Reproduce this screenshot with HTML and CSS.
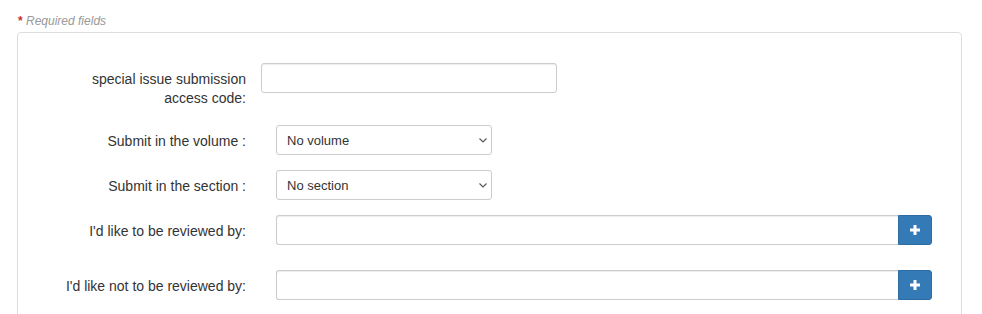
FILE: index.html
```html
<!DOCTYPE html>
<html>
<head>
  <meta charset="utf-8">
  <link rel="stylesheet" href="styles.css">
</head>
<body>

  <!-- Note about mandatory fields -->
  <div class="required-note"><span class="star">*</span> Required fields</div>

  <!-- Submission options panel -->
  <div class="panel">

    <div class="form-row first">
      <label class="form-label">special issue submission access code:</label>
      <div class="field">
        <input type="text" class="text-input code-input">
      </div>
    </div>

    <div class="form-row">
      <label class="form-label">Submit in the volume :</label>
      <div class="field indent">
        <span class="select-wrap">
          <select class="select-input">
            <option>No volume</option>
          </select>
          <svg class="chevron" width="8" height="5" viewBox="0 0 8 5"><path d="M0.5 0.5 L4 4 L7.5 0.5" fill="none" stroke="#555" stroke-width="1.1"/></svg>
        </span>
      </div>
    </div>

    <div class="form-row">
      <label class="form-label">Submit in the section :</label>
      <div class="field indent">
        <span class="select-wrap">
          <select class="select-input">
            <option>No section</option>
          </select>
          <svg class="chevron" width="8" height="5" viewBox="0 0 8 5"><path d="M0.5 0.5 L4 4 L7.5 0.5" fill="none" stroke="#555" stroke-width="1.1"/></svg>
        </span>
      </div>
    </div>

    <div class="form-row">
      <label class="form-label">I'd like to be reviewed by:</label>
      <div class="field indent">
        <div class="input-group">
          <input type="text" class="text-input group-input">
          <button class="add-button"><svg width="10" height="10" viewBox="0 0 10 10"><rect x="3.5" y="0" width="3" height="10" fill="#fff"/><rect x="0" y="3.5" width="10" height="3" fill="#fff"/></svg></button>
        </div>
      </div>
    </div>

    <div class="form-row spaced">
      <label class="form-label">I'd like not to be reviewed by:</label>
      <div class="field indent">
        <div class="input-group">
          <input type="text" class="text-input group-input">
          <button class="add-button"><svg width="10" height="10" viewBox="0 0 10 10"><rect x="3.5" y="0" width="3" height="10" fill="#fff"/><rect x="0" y="3.5" width="10" height="3" fill="#fff"/></svg></button>
        </div>
      </div>
    </div>

  </div>

</body>
</html>
```

FILE: styles.css
```css
/* Page base */
body {
  margin: 0;
  background: #fff;
  font-family: "Liberation Sans", Arial, Helvetica, sans-serif;
  font-size: 14px;
  color: #333;
}

/* "* Required fields" line */
.required-note {
  margin: 14px 0 0 18px;
  height: 18px;
  line-height: 15px;
  font-size: 12px;
  font-style: italic;
  color: #999;
}

.star {
  color: #c9302c;
  font-style: normal;
  font-weight: bold;
}

/* The bordered box around the form */
.panel {
  margin: 0 20px 0 17px;
  height: 320px;
  border: 1px solid #ddd;
  border-radius: 4px;
  padding-top: 30px;
  box-sizing: border-box;
}

/* One label + field line */
.form-row {
  display: flex;
  align-items: flex-start;
  margin-bottom: 15px;
}

.form-row.first {
  margin-bottom: 17px;
}

.form-row.spaced {
  margin-top: 25px;
}

.form-label {
  width: 213px;
  margin-left: 15px;
  padding-top: 7px;
  text-align: right;
  line-height: 19px;
  box-sizing: border-box;
  font-size: 14px;
  color: #333;
}

.form-row.first .form-label {
  padding-left: 40px;
}

.field {
  flex: 1;
  padding-left: 15px;
}

.field.indent {
  padding-left: 30px;
}

/* Text inputs */
.text-input {
  display: block;
  height: 30px;
  padding: 5px 10px;
  box-sizing: border-box;
  border: 1px solid #ccc;
  border-radius: 3px;
  background: #fff;
  box-shadow: inset 0 1px 1px rgba(0, 0, 0, 0.075);
  font-family: inherit;
  font-size: 13px;
  outline: none;
}

.code-input {
  width: 296px;
}

/* Drop-down lists */
.select-wrap {
  position: relative;
  display: inline-block;
}

.select-input {
  -webkit-appearance: none;
  appearance: none;
  display: block;
  width: 216px;
  height: 30px;
  padding: 0 10px;
  box-sizing: border-box;
  border: 1px solid #ccc;
  border-radius: 3px;
  background: #fff;
  font-family: inherit;
  font-size: 13px;
  color: #333;
  outline: none;
}

.chevron {
  position: absolute;
  right: 5px;
  top: 13px;
}

/* Input with the "+" button attached */
.input-group {
  display: flex;
  width: 656px;
}

.group-input {
  flex: 1;
  border-radius: 3px 0 0 3px;
  border-right: none;
}

.add-button {
  width: 34px;
  height: 30px;
  padding: 0;
  border: 1px solid #2e6da4;
  border-radius: 0 3px 3px 0;
  background: #337ab7;
  display: flex;
  align-items: center;
  justify-content: center;
  cursor: pointer;
}
```
